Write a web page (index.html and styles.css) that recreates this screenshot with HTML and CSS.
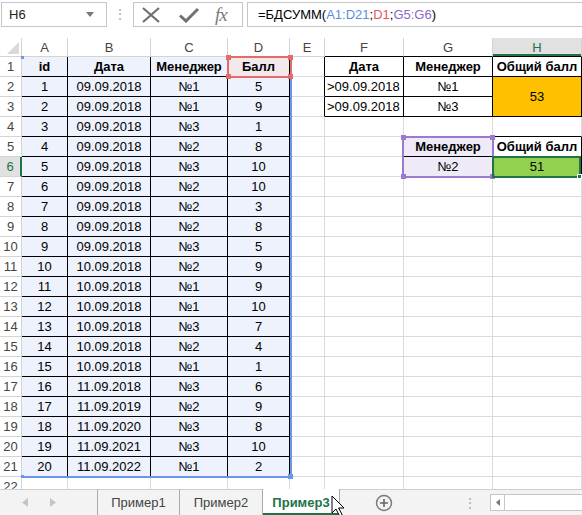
FILE: index.html
```
<!DOCTYPE html>
<html lang="ru">
<head>
	<meta charset="UTF-8">
	<title>БДСУММ - Пример3</title>
	<link rel="stylesheet" href="styles.css">
</head>
<body>

<!-- строка формул -->
<div class="bar">
	<div class="namebox">
		<span>H6</span>
		<svg class="caret" width="8" height="5" viewBox="0 0 8 5"><path d="M0 0h8L4 5z" fill="#777"/></svg>
	</div>
	<span class="grip">⋮</span>
	<div class="btns">
		<svg width="20" height="16" viewBox="0 0 20 16"><path d="M2 1L18 15M18 1L2 15" stroke="#707070" stroke-width="2.2" fill="none"/></svg>
		<svg width="20" height="16" viewBox="0 0 20 16"><path d="M1 8.5L7 14L19 2" stroke="#707070" stroke-width="3" fill="none"/></svg>
		<span class="fx">fx</span>
	</div>
	<div class="fbox">=БДСУММ(<span class="f-a">A1:D21</span>;<span class="f-d">D1</span>;<span class="f-g">G5:G6</span>)</div>
</div>

<!-- лист -->
<div class="sheet">
	<div class="h corner"><i></i></div>
	<div class="h">A</div><div class="h">B</div><div class="h">C</div><div class="h">D</div><div class="h">E</div>
	<div class="h kb">F</div><div class="h kb">G</div><div class="h sel kb">H</div>

	<div class="rh">1</div>
	<div class="c k ra bd">id</div><div class="c k ra bd">Дата</div><div class="c k ra bd">Менеджер</div><div class="c k rd bd">Балл</div>
	<div class="c kr"></div><div class="c k bd">Дата</div><div class="c k bd">Менеджер</div><div class="c k bd">Общий балл</div>

	<div class="rh">2</div>
	<div class="c k ra">1</div><div class="c k ra">09.09.2018</div><div class="c k ra">№1</div><div class="c k ra">5</div>
	<div class="c kr"></div><div class="c k l">&gt;09.09.2018</div><div class="c k">№1</div><div class="c k orange merge">53</div>

	<div class="rh">3</div>
	<div class="c k ra">2</div><div class="c k ra">09.09.2018</div><div class="c k ra">№1</div><div class="c k ra">9</div>
	<div class="c kr"></div><div class="c k l">&gt;09.09.2018</div><div class="c k">№3</div>

	<div class="rh">4</div>
	<div class="c k ra">3</div><div class="c k ra">09.09.2018</div><div class="c k ra">№3</div><div class="c k ra">1</div>
	<div class="c"></div><div class="c"></div><div class="c kb"></div><div class="c kb"></div>

	<div class="rh">5</div>
	<div class="c k ra">4</div><div class="c k ra">09.09.2018</div><div class="c k ra">№2</div><div class="c k ra">8</div>
	<div class="c"></div><div class="c kr"></div><div class="c k rg bd">Менеджер</div><div class="c k bd">Общий балл</div>

	<div class="rh sel">6</div>
	<div class="c k ra">5</div><div class="c k ra">09.09.2018</div><div class="c k ra">№3</div><div class="c k ra">10</div>
	<div class="c"></div><div class="c kr"></div><div class="c k rg">№2</div><div class="c k green">51</div>

	<div class="rh">7</div>
	<div class="c k ra">6</div><div class="c k ra">09.09.2018</div><div class="c k ra">№2</div><div class="c k ra">10</div>
	<div class="c"></div><div class="c"></div><div class="c"></div><div class="c"></div>

	<div class="rh">8</div>
	<div class="c k ra">7</div><div class="c k ra">09.09.2018</div><div class="c k ra">№2</div><div class="c k ra">3</div>
	<div class="c"></div><div class="c"></div><div class="c"></div><div class="c"></div>

	<div class="rh">9</div>
	<div class="c k ra">8</div><div class="c k ra">09.09.2018</div><div class="c k ra">№2</div><div class="c k ra">8</div>
	<div class="c"></div><div class="c"></div><div class="c"></div><div class="c"></div>

	<div class="rh">10</div>
	<div class="c k ra">9</div><div class="c k ra">09.09.2018</div><div class="c k ra">№3</div><div class="c k ra">5</div>
	<div class="c"></div><div class="c"></div><div class="c"></div><div class="c"></div>

	<div class="rh">11</div>
	<div class="c k ra">10</div><div class="c k ra">10.09.2018</div><div class="c k ra">№2</div><div class="c k ra">9</div>
	<div class="c"></div><div class="c"></div><div class="c"></div><div class="c"></div>

	<div class="rh">12</div>
	<div class="c k ra">11</div><div class="c k ra">10.09.2018</div><div class="c k ra">№1</div><div class="c k ra">9</div>
	<div class="c"></div><div class="c"></div><div class="c"></div><div class="c"></div>

	<div class="rh">13</div>
	<div class="c k ra">12</div><div class="c k ra">10.09.2018</div><div class="c k ra">№1</div><div class="c k ra">10</div>
	<div class="c"></div><div class="c"></div><div class="c"></div><div class="c"></div>

	<div class="rh">14</div>
	<div class="c k ra">13</div><div class="c k ra">10.09.2018</div><div class="c k ra">№3</div><div class="c k ra">7</div>
	<div class="c"></div><div class="c"></div><div class="c"></div><div class="c"></div>

	<div class="rh">15</div>
	<div class="c k ra">14</div><div class="c k ra">10.09.2018</div><div class="c k ra">№2</div><div class="c k ra">4</div>
	<div class="c"></div><div class="c"></div><div class="c"></div><div class="c"></div>

	<div class="rh">16</div>
	<div class="c k ra">15</div><div class="c k ra">10.09.2018</div><div class="c k ra">№1</div><div class="c k ra">1</div>
	<div class="c"></div><div class="c"></div><div class="c"></div><div class="c"></div>

	<div class="rh">17</div>
	<div class="c k ra">16</div><div class="c k ra">11.09.2018</div><div class="c k ra">№3</div><div class="c k ra">6</div>
	<div class="c"></div><div class="c"></div><div class="c"></div><div class="c"></div>

	<div class="rh">18</div>
	<div class="c k ra">17</div><div class="c k ra">11.09.2019</div><div class="c k ra">№2</div><div class="c k ra">9</div>
	<div class="c"></div><div class="c"></div><div class="c"></div><div class="c"></div>

	<div class="rh">19</div>
	<div class="c k ra">18</div><div class="c k ra">11.09.2020</div><div class="c k ra">№3</div><div class="c k ra">8</div>
	<div class="c"></div><div class="c"></div><div class="c"></div><div class="c"></div>

	<div class="rh">20</div>
	<div class="c k ra">19</div><div class="c k ra">11.09.2021</div><div class="c k ra">№3</div><div class="c k ra">10</div>
	<div class="c"></div><div class="c"></div><div class="c"></div><div class="c"></div>

	<div class="rh">21</div>
	<div class="c k ra">20</div><div class="c k ra">11.09.2022</div><div class="c k ra">№1</div><div class="c k ra">2</div>
	<div class="c"></div><div class="c"></div><div class="c"></div><div class="c"></div>

	<div class="rh">22</div>
	<div class="c"></div><div class="c"></div><div class="c"></div><div class="c"></div>
	<div class="c"></div><div class="c"></div><div class="c"></div><div class="c"></div>

	<!-- рамки ссылок формулы -->
	<div class="box box-a"><b class="hd tl"></b><b class="hd bl"></b><b class="hd br"></b></div>
	<div class="box box-d"><b class="hd tl"></b><b class="hd tr"></b><b class="hd bl"></b><b class="hd br"></b></div>
	<div class="box box-g"><b class="hd tl"></b><b class="hd tr"></b><b class="hd bl"></b><b class="hd br"></b></div>
	<div class="box box-h"><b class="hd br"></b></div>
</div>

<!-- ярлыки листов -->
<div class="tabs">
	<div class="nav">
		<svg width="6" height="9" viewBox="0 0 6 9"><path d="M6 0v9L0 4.5z" fill="#c4c4c4"/></svg>
		<svg width="6" height="9" viewBox="0 0 6 9"><path d="M0 0v9l6-4.5z" fill="#c4c4c4"/></svg>
	</div>
	<div class="tab">Пример1</div>
	<div class="tab">Пример2</div>
	<div class="tab on">Пример3</div>
	<div class="tail">
		<svg class="add" width="18" height="18" viewBox="0 0 18 18"><circle cx="9" cy="9" r="7.5" stroke="#777" stroke-width="1.4" fill="none"/><path d="M9 5v8M5 9h8" stroke="#666" stroke-width="1.6"/></svg>
		<span class="dots">⋮</span>
		<div class="scroll">
			<span class="sb-l"><svg width="4" height="7" viewBox="0 0 4 7"><path d="M4 0v7L0 3.5z" fill="#777"/></svg></span>
			<span class="thumb"></span>
		</div>
	</div>
	<svg class="cursor" width="15" height="22" viewBox="0 0 15 22"><path d="M1 1v17l4-4 3.5 7 2.6-1.3L7.6 13H13z" fill="#fff" stroke="#000" stroke-width="1"/></svg>
</div>

</body>
</html>
```

FILE: styles.css
```
*{margin:0; padding:0; box-sizing:border-box;}
body{width:582px; height:515px; overflow:hidden; background:#fff; font-family:"Liberation Sans", Arial, sans-serif; font-size:13px; color:#000;}

/*строка формул*/
.bar{display:flex; align-items:flex-start; height:38px; padding:2px 0 0 1px;}
.namebox{display:flex; align-items:center; justify-content:space-between; width:106px; height:25px; border:1px solid #c6c6c6; padding:0 12px 0 7px; color:#222;}
.grip{width:26px; text-align:center; color:#b0b0b0; font-size:14px; line-height:25px;}
.btns{display:flex; align-items:center; gap:18px; width:110px; height:25px; border:1px solid #c6c6c6; padding-left:7px;}
.fx{font-family:"Liberation Serif", serif; font-style:italic; font-size:19px; color:#7a7a7a; letter-spacing:-1px; margin-left:-2px;}
.fbox{flex:1; height:25px; margin-left:4px; border:1px solid #c6c6c6; border-right:0; padding-left:10px; line-height:23px; white-space:nowrap;}
.f-a{color:#5b8ee0;}
.f-d{color:#e05a5a;}
.f-g{color:#8b67c8;}

/*лист*/
.sheet{position:relative; height:451px; overflow:hidden; display:grid; grid-template-columns:22px 46px 83px 77px 62px 35px 79px 89px 89px; grid-template-rows:19px; grid-auto-rows:20px;}
.h,
.rh{display:flex; align-items:center; justify-content:center; color:#444; border-right:1px solid #d4d4d4; border-bottom:1px solid #d4d4d4;}
.h{padding-top:1px;}
.corner{position:relative;}
.corner i{position:absolute; right:2px; bottom:2px; border-style:solid; border-width:0 0 12px 12px; border-color:transparent transparent #dadada transparent;}
.h.sel{background:#e1e1e1; color:#217346; border-bottom:1px solid #000; box-shadow:inset 0 -2px #217346;}
.rh.sel{background:#e1e1e1; color:#217346; border-right:2px solid #217346;}
.c{display:flex; align-items:center; justify-content:center; white-space:nowrap; border-right:1px solid #dadada; border-bottom:1px solid #dadada;}
.c.l{justify-content:flex-start; padding-left:2px;}
.bd{font-weight:bold;}
.k{border-right-color:#000; border-bottom-color:#000;}
.kr{border-right-color:#000;}
.kb{border-bottom-color:#000;}
.ra{background:#edf2fc;}
.rd{background:#f3e8ec;}
.rg{background:#efeaf7;}
.orange{background:#ffc000;}
.green{background:#92d050;}
.merge{grid-row:span 2;}

/*рамки ссылок*/
.box{position:absolute;}
.box-a{left:22px; top:19px; width:270px; height:421px; border-right:2px solid #6a97e8; border-bottom:2px solid #6a97e8;}
.box-d{left:227px; top:18px; width:65px; height:22px; border:2px solid #e36b6b;}
.box-g{left:402px; top:98px; width:92px; height:42px; border:2px solid #9a7bd1;}
.box-h{left:492px; top:118px; width:89px; height:22px; border:2px solid #217346;}
.hd{position:absolute; width:5px; height:5px; background:inherit;}
.box-a .hd{background:#6a97e8;}
.box-d .hd{background:#e36b6b;}
.box-g .hd{background:#9a7bd1;}
.box-h .hd{background:#217346; border:1px solid #fff;}
.tl{left:-3px; top:-3px;}
.tr{right:-3px; top:-3px;}
.bl{left:-3px; bottom:-3px;}
.br{right:-3px; bottom:-3px;}
.box-a .tl{left:-1px; top:-1px; width:3px; height:3px;}
.box-a .bl{left:-1px; width:3px; height:3px; bottom:-2px;}

/*ярлыки листов*/
.tabs{position:relative; display:flex; height:26px; background:#f3f3f3;}
.nav{display:flex; align-items:center; gap:22px; width:97px; padding-left:22px; border-top:1px solid #cfcfcf;}
.tab{display:flex; align-items:center; justify-content:center; border-top:1px solid #cfcfcf; border-left:1px solid #ababab; color:#444;}
.tab:nth-child(2){width:82px;}
.tab:nth-child(3){width:83px;}
.tab.on{width:78px; background:#fff; border-top:0; border-right:1px solid #ababab; color:#217346; font-weight:bold; box-shadow:inset 0 -2px #217346;}
.tail{flex:1; display:flex; align-items:center; border-top:1px solid #cfcfcf; padding-left:35px;}
.add{display:block;}
.dots{margin-left:70px; color:#b0b0b0; font-size:14px;}
.scroll{display:flex; flex:1; height:17px; margin-left:13px; border:1px solid #c6c6c6; border-right:0;}
.sb-l{display:flex; align-items:center; justify-content:center; width:14px; border-right:1px solid #c6c6c6; background:#fff;}
.thumb{flex:1; background:#fff;}
.cursor{position:absolute; left:331px; top:6px;}
```
